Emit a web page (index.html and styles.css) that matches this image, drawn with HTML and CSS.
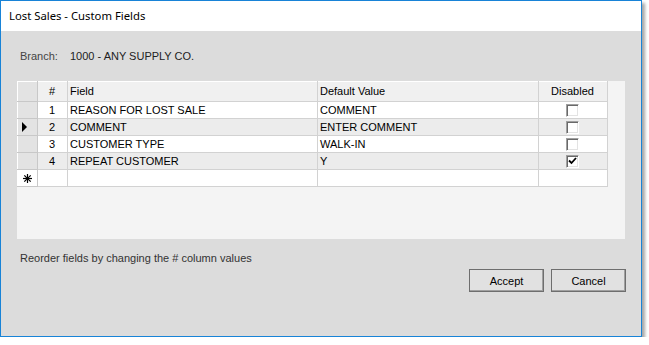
FILE: index.html
```html
<!DOCTYPE html>
<html lang="en">
<head>
  <meta charset="UTF-8" />
  <title>Lost Sales - Custom Fields</title>
  <link rel="stylesheet" href="styles.css">
</head>
<body>
  <div class="window">
    <div class="titlebar">Lost Sales - Custom Fields</div>

    <div class="content">
      <div class="branch">
        <span class="label">Branch:</span>
        <span class="value">1000 - ANY SUPPLY CO.</span>
      </div>

      <div class="grid">
        <table>
          <thead>
            <tr>
              <th class="rowhead"></th>
              <th class="col-num">#</th>
              <th class="col-field">Field</th>
              <th class="col-default">Default Value</th>
              <th class="col-disabled">Disabled</th>
            </tr>
          </thead>
          <tbody>
            <tr>
              <td class="rowhead"></td>
              <td class="num">1</td>
              <td>REASON FOR LOST SALE</td>
              <td>COMMENT</td>
              <td class="check"><span class="box"></span></td>
            </tr>
            <tr class="alt">
              <td class="rowhead"><span class="arrow"></span></td>
              <td class="num">2</td>
              <td>COMMENT</td>
              <td>ENTER COMMENT</td>
              <td class="check"><span class="box"></span></td>
            </tr>
            <tr>
              <td class="rowhead"></td>
              <td class="num">3</td>
              <td>CUSTOMER TYPE</td>
              <td>WALK-IN</td>
              <td class="check"><span class="box"></span></td>
            </tr>
            <tr class="alt">
              <td class="rowhead"></td>
              <td class="num">4</td>
              <td>REPEAT CUSTOMER</td>
              <td>Y</td>
              <td class="check">
                <span class="box">
                  <svg width="9" height="8" viewBox="0 0 9 8"><polyline points="1,3.5 3.5,6 8,1" fill="none" stroke="#000" stroke-width="1.8"/></svg>
                </span>
              </td>
            </tr>
            <tr class="newrow">
              <td class="rowhead">
                <svg width="9" height="9" viewBox="0 0 9 9"><g stroke="#000" stroke-width="1.2"><line x1="4.5" y1="0" x2="4.5" y2="9"/><line x1="0" y1="4.5" x2="9" y2="4.5"/><line x1="1.3" y1="1.3" x2="7.7" y2="7.7"/><line x1="7.7" y1="1.3" x2="1.3" y2="7.7"/></g></svg>
              </td>
              <td></td>
              <td></td>
              <td></td>
              <td></td>
            </tr>
          </tbody>
        </table>
      </div>

      <div class="hint">Reorder fields by changing the # column values</div>

      <div class="buttons">
        <button class="btn">Accept</button>
        <button class="btn">Cancel</button>
      </div>
    </div>
  </div>
</body>
</html>
```

FILE: styles.css
```css
body {
  margin: 0;
  padding: 0;
  background: #fff;
  font-family: 'Liberation Sans', Arial, sans-serif;
  font-size: 11px;
  color: #000;
}

.window {
  width: 640px;
  height: 335px;
  border: 1px solid #1883d7;
  background: #dcdcdc;
  box-shadow: 3px 3px 3px rgba(0,0,0,0.35);
  display: flex;
  flex-direction: column;
}

.titlebar {
  height: 30px;
  line-height: 30px;
  background: #fff;
  padding-left: 8px;
  font-family: 'Noto Sans', 'Open Sans', sans-serif;
  font-size: 11.3px;
  color: #000;
}

.content {
  flex: 1;
  padding: 18px 15px 0 16px;
  display: flex;
  flex-direction: column;
}

.branch {
  display: flex;
  height: 14px;
  line-height: 14px;
  padding-left: 3px;
  color: #222;
}
.branch .label {
  width: 50px;
  color: #444;
}

.grid {
  margin-top: 18px;
  height: 158px;
  width: 608px;
  background: #f4f4f4;
}

table {
  border-collapse: collapse;
  table-layout: fixed;
  width: 591px;
}

th, td {
  border: 1px solid #d2d2d2;
  padding: 0 3px 0 2px;
  height: 16px;
  line-height: 16px;
  text-align: left;
  font-weight: normal;
  white-space: nowrap;
  overflow: hidden;
  background: #fff;
}

th {
  height: 19px;
  line-height: 19px;
  background: #f0f0f0;
  border-top-color: #fff;
  border-left-color: #fff;
}

tr.alt td {
  background: #ececec;
}

th.rowhead, td.rowhead, tr.alt td.rowhead {
  width: 14px;
  background: #e3e3e3;
  border-color: #fff #c8c8c8 #c8c8c8 #fff;
  padding: 0 3px 0 2px;
  text-align: center;
}
tr.newrow td.rowhead {
  background: #fff;
}
td.rowhead svg {
  display: block;
  margin: 0 auto;
}

.col-num { width: 24px; text-align: center; }
.col-field { width: 244px; }
.col-default { width: 215px; }
.col-disabled { text-align: center; }

th.col-num, th.col-disabled {
  text-align: center;
}

td.num {
  text-align: center;
}

.arrow {
  display: block;
  width: 0;
  height: 0;
  margin-left: 2px;
  border-top: 5px solid transparent;
  border-bottom: 5px solid transparent;
  border-left: 5px solid #000;
}

td.check {
  text-align: center;
}

.box {
  display: inline-flex;
  align-items: center;
  justify-content: center;
  vertical-align: middle;
  box-sizing: border-box;
  width: 13px;
  height: 13px;
  background: #fff;
  border-top: 1px solid #a0a0a0;
  border-left: 1px solid #a0a0a0;
  border-right: 1px solid #fff;
  border-bottom: 1px solid #fff;
  box-shadow: inset 1px 1px 0 #696969, inset -1px -1px 0 #e3e3e3;
  margin-top: -2px;
}

.hint {
  margin-top: 12px;
  padding-left: 3px;
  height: 14px;
  line-height: 14px;
  color: #333;
}

.buttons {
  display: flex;
  justify-content: flex-end;
  gap: 7px;
  margin-top: 4px;
  width: 609px;
}

.btn {
  width: 75px;
  height: 23px;
  background: #e1e1e1;
  border: 1px solid #6e6e6e;
  box-shadow: inset -1px -1px 0 #a0a0a0;
  font-family: 'Liberation Sans', Arial, sans-serif;
  font-size: 11px;
  color: #000;
  padding: 0;
}
```
